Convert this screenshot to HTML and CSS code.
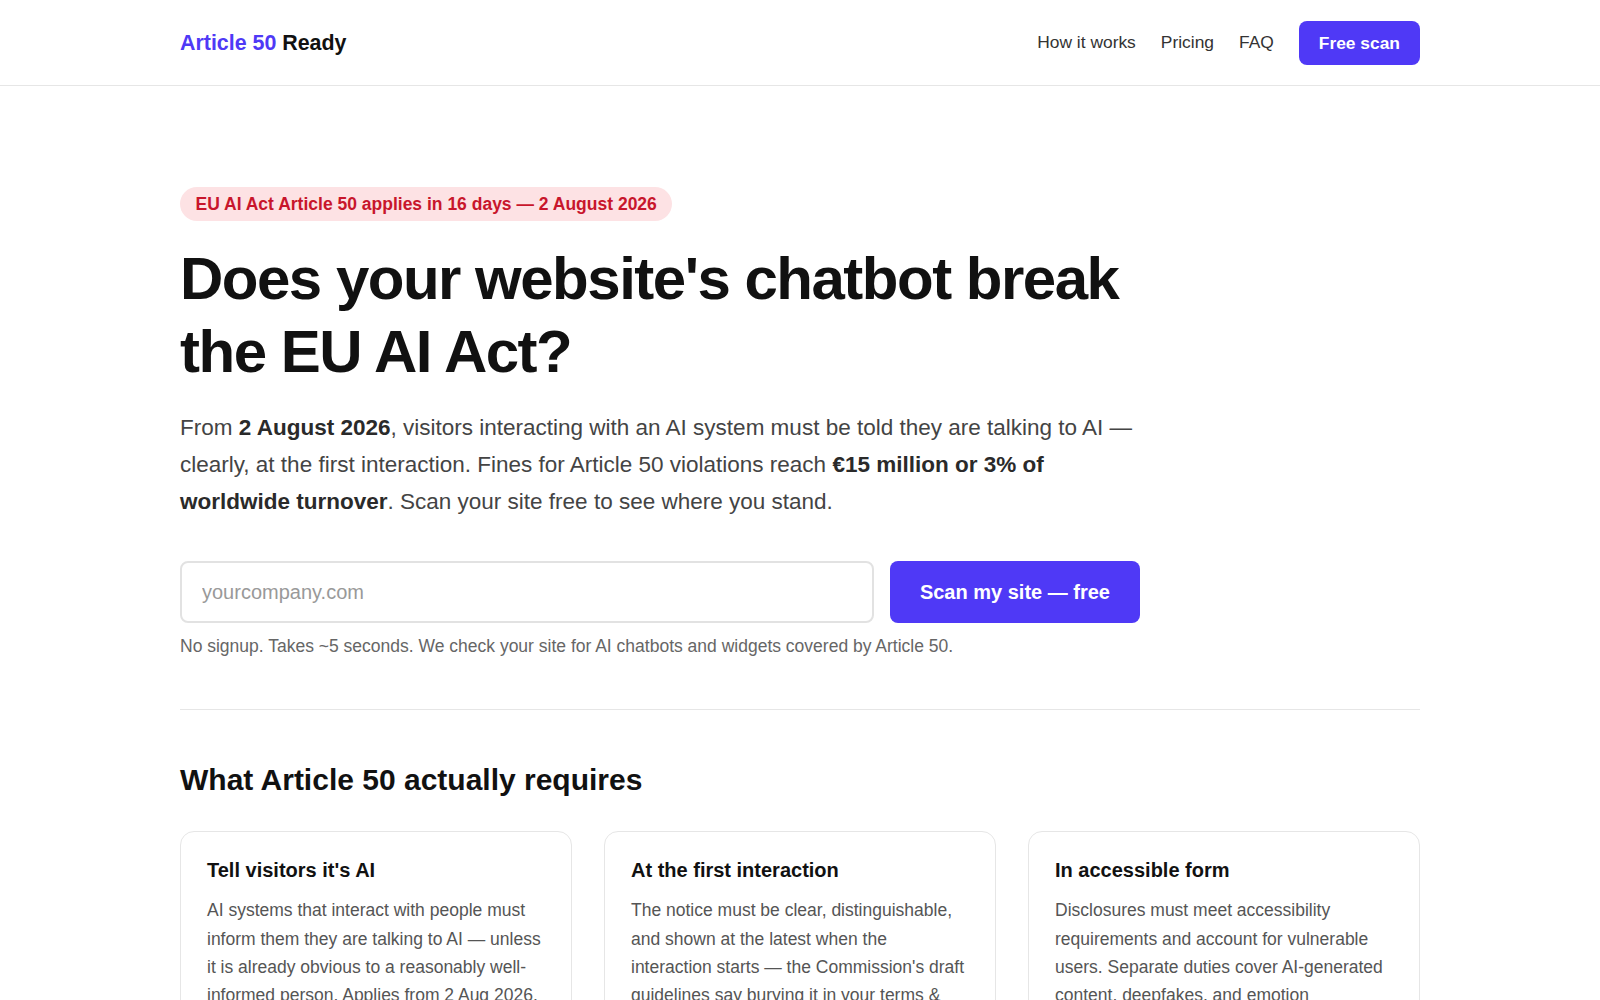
FILE: index.html
```html
<!DOCTYPE html>
<html>
<head>
  <title>Article 50 Ready</title>
  <link rel="stylesheet" href="styles.css">
</head>
<body>
<header class="site-header">
  <div class="wrap header-inner">
    <a class="logo" href="#"><span class="logo-accent">Article 50</span> Ready</a>
    <nav class="nav">
      <a href="#how">How it works</a>
      <a href="#pricing">Pricing</a>
      <a href="#faq">FAQ</a>
      <a class="btn btn-small" href="#scan">Free scan</a>
    </nav>
  </div>
</header>

<main>
  <section class="wrap hero" id="scan">
    <div class="hero-body">
      <span class="badge">EU AI Act Article 50 applies in 16 days — 2 August 2026</span>
      <h1>Does your website's chatbot break the EU AI Act?</h1>
      <p class="lead">From <strong>2 August 2026</strong>, visitors interacting with an AI system must be told they are talking to AI — clearly, at the first interaction. Fines for Article 50 violations reach <strong>€15 million or 3% of worldwide turnover</strong>. Scan your site free to see where you stand.</p>
      <form class="scan-form" onsubmit="return false">
        <input class="scan-input" type="text" placeholder="yourcompany.com">
        <button class="btn btn-large" type="submit">Scan my site — free</button>
      </form>
      <p class="hint">No signup. Takes ~5 seconds. We check your site for AI chatbots and widgets covered by Article 50.</p>
    </div>
  </section>

  <section class="wrap requires" id="how">
    <h2>What Article 50 actually requires</h2>
    <div class="cards">
      <div class="card">
        <h3>Tell visitors it's AI</h3>
        <p>AI systems that interact with people must inform them they are talking to AI — unless it is already obvious to a reasonably well-informed person. Applies from 2 Aug 2026.</p>
      </div>
      <div class="card">
        <h3>At the first interaction</h3>
        <p>The notice must be clear, distinguishable, and shown at the latest when the interaction starts — the Commission's draft guidelines say burying it in your terms &amp; conditions isn't enough.</p>
      </div>
      <div class="card">
        <h3>In accessible form</h3>
        <p>Disclosures must meet accessibility requirements and account for vulnerable users. Separate duties cover AI-generated content, deepfakes, and emotion recognition.</p>
      </div>
    </div>
  </section>
</main>
</body>
</html>
```

FILE: styles.css
```css
:root {
  --brand: #4f39f6;
  --ink: #111;
  --text: #444;
  --muted: #666;
  --line: #e6e6e6;
}

* {
  box-sizing: border-box;
}

body {
  margin: 0;
  background: #fff;
  color: var(--ink);
  font-family: "Liberation Sans", Arial, sans-serif;
}

a {
  text-decoration: none;
  color: inherit;
}

.wrap {
  max-width: 1240px;
  margin: 0 auto;
}

/* header */

.site-header {
  border-bottom: 1px solid var(--line);
}

.header-inner {
  height: 85px;
  display: flex;
  align-items: center;
  justify-content: space-between;
}

.logo {
  font-size: 21.4px;
  font-weight: 700;
  color: var(--ink);
  padding-top: 1px;
}

.logo-accent {
  color: var(--brand);
}

.nav {
  display: flex;
  align-items: center;
  gap: 25px;
  font-size: 17.4px;
  color: #333;
}

.btn {
  display: inline-block;
  background: var(--brand);
  color: #fff;
  font-family: inherit;
  font-weight: 700;
  border: none;
  border-radius: 8px;
  cursor: pointer;
}

.btn-small {
  font-size: 17.4px;
  line-height: 20px;
  padding: 12px 20px;
}

.btn-large {
  font-size: 20px;
  height: 62px;
  padding: 0 30px;
}

/* hero */

.hero {
  padding: 101px 0 51px;
  border-bottom: 1px solid var(--line);
}

.hero-body {
  max-width: 960px;
  display: flex;
  flex-direction: column;
  align-items: flex-start;
}

.badge {
  background: #fde2e4;
  color: #c8162c;
  font-size: 17.5px;
  font-weight: 700;
  line-height: 20px;
  padding: 7px 15.5px;
  border-radius: 999px;
}

h1 {
  font-size: 60px;
  line-height: 1.22;
  letter-spacing: -0.025em;
  margin: 21px 0 22px;
  color: var(--ink);
}

.lead {
  font-size: 22.5px;
  line-height: 1.63;
  color: var(--text);
  margin: 0;
}

.lead strong {
  color: #2a2a2a;
}

.scan-form {
  display: flex;
  gap: 16px;
  width: 100%;
  margin-top: 41px;
}

.scan-input {
  flex: 1;
  height: 62px;
  padding: 0 20px;
  border: 2px solid #e2e2e2;
  border-radius: 8px;
  font-family: inherit;
  font-size: 20px;
  color: var(--ink);
  outline: none;
}

.scan-input::placeholder {
  color: #999;
}

.hint {
  margin: 11px 0 0;
  font-size: 17.5px;
  line-height: 24px;
  color: var(--muted);
}

/* requirements */

.requires {
  padding-top: 52px;
}

h2 {
  font-size: 30px;
  line-height: 36px;
  margin: 0 0 33px;
}

.cards {
  display: grid;
  grid-template-columns: repeat(3, 1fr);
  gap: 32px;
}

.card {
  border: 1px solid var(--line);
  border-radius: 14px;
  padding: 25px 26px;
}

.card h3 {
  font-size: 20px;
  line-height: 26px;
  margin: 0 0 13px;
}

.card p {
  font-size: 17.5px;
  line-height: 28.2px;
  color: #555;
  margin: 0;
}
```
